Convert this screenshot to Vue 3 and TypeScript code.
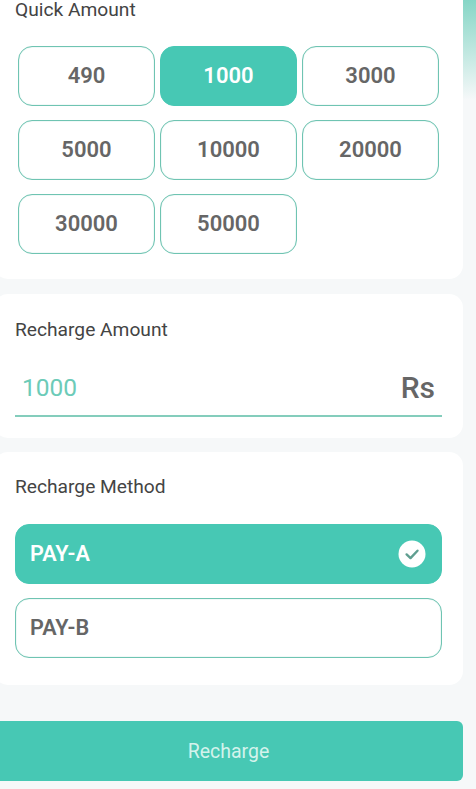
<script setup lang="ts">
const amounts: number[] = [490, 1000, 3000, 5000, 10000, 20000, 30000, 50000]
const selected = 1000
</script>

<template>
  <main class="page">
    <section class="card quick">
      <h2 class="title">Quick Amount</h2>
      <div class="grid">
        <button v-for="a in amounts" :key="a" class="amount" :class="{ active: a === selected }">{{ a }}</button>
      </div>
    </section>

    <section class="card entry">
      <h2 class="title">Recharge Amount</h2>
      <div class="field">
        <span class="value">1000</span>
        <span class="unit">Rs</span>
      </div>
    </section>

    <section class="card method">
      <h2 class="title">Recharge Method</h2>
      <div class="options">
        <div class="option active">
          <span>PAY-A</span>
          <svg class="check" width="28" height="28" viewBox="0 0 28 28" aria-hidden="true">
            <circle cx="14" cy="14" r="13.5" fill="#fff" />
            <path d="M8.6 14.4l3.9 3.7 7-7.4" fill="none" stroke="#5f9e90" stroke-width="2.4" stroke-linecap="round" stroke-linejoin="round" />
          </svg>
        </div>
        <div class="option">
          <span>PAY-B</span>
        </div>
      </div>
    </section>

    <button class="submit">Recharge</button>
  </main>
</template>

<style>
html, body { margin: 0; background: #f6f8f9; }
</style>

<style scoped>
.page {
  box-sizing: border-box;
  width: 476px;
  height: 789px;
  overflow: hidden;
  padding-right: 13px;
  font-family: Roboto, "Liberation Sans", sans-serif;
  background: linear-gradient(180deg, #86d6c6 0, #f6f8f9 100px);
}
.card {
  box-sizing: border-box;
  margin-left: -6px;
  background: #fff;
  border-radius: 14px;
}
.title {
  margin: 0;
  font-size: 19.2px;
  font-weight: 400;
  line-height: 22px;
  color: #444;
}
.quick {
  height: 279px;
  padding: 0 0 0 21px;
  border-radius: 0 0 14px 14px;
}
.quick .title {
  line-height: 20px;
}
.grid {
  display: grid;
  grid-template-columns: repeat(3, 137px);
  grid-auto-rows: 60px;
  column-gap: 5px;
  row-gap: 14px;
  margin: 26px 0 0 3px;
}
.amount {
  box-sizing: border-box;
  background: #fff;
  border: 1px solid #6fc4b2;
  box-shadow: inset 0 0 1px #6fc4b2;
  border-radius: 14px;
  font-family: inherit;
  font-size: 22px;
  font-weight: 600;
  color: #666;
  padding: 0 0 2px;
}
.amount.active {
  background: #47c8b4;
  border-color: #47c8b4;
  box-shadow: none;
  color: #fff;
}
.entry {
  height: 144px;
  margin-top: 15px;
  padding: 25px 21px 0;
}
.field {
  box-sizing: border-box;
  display: flex;
  align-items: center;
  justify-content: space-between;
  height: 62px;
  margin-top: 14px;
  border-bottom: 2px solid #84cdbc;
  padding: 4px 7px 0;
}
.value {
  font-size: 24.5px;
  color: #6ccbb8;
}
.unit {
  font-size: 30px;
  font-weight: 500;
  color: #666;
}
.method {
  height: 233px;
  margin-top: 14px;
  padding: 24px 21px 0;
}
.options {
  display: flex;
  flex-direction: column;
  gap: 14px;
  margin-top: 26px;
}
.option {
  box-sizing: border-box;
  display: flex;
  align-items: center;
  justify-content: space-between;
  height: 60px;
  padding: 0 15px 2px 14px;
  border: 1px solid #6fc4b2;
  box-shadow: inset 0 0 1px #6fc4b2;
  border-radius: 14px;
  font-size: 21.6px;
  font-weight: 600;
  color: #666;
  background: #fff;
}
.option.active {
  background: #47c8b4;
  border-color: #47c8b4;
  box-shadow: none;
  color: #fff;
}
.check {
  margin-top: 2px;
}
.submit {
  display: block;
  box-sizing: border-box;
  width: 469px;
  height: 60px;
  margin: 36px 0 0 -6px;
  padding: 0;
  border: 0;
  border-radius: 6px;
  background: #47c8b4;
  color: #d4f3ec;
  font-family: inherit;
  font-size: 19.5px;
  font-weight: 400;
}
</style>
